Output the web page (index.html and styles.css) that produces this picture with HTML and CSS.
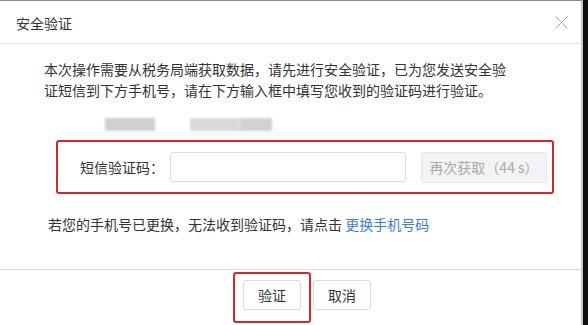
FILE: index.html
```html
<!DOCTYPE html>
<html>
<head>
<meta charset="utf-8">
<link rel="stylesheet" href="styles.css">
</head>
<body>
<div class="page">
  <div class="dialog">
    <div class="header">
      <span class="title">安全验证</span>
      <svg class="close" width="13" height="13" viewBox="0 0 13 13"><path d="M0.5 0.5L12.5 12.5M12.5 0.5L0.5 12.5" stroke="#a8a8a8" stroke-width="1" fill="none"/></svg>
    </div>
    <div class="body">
      <p class="intro">本次操作需要从税务局端获取数据，请先进行安全验证，已为您发送安全验<br>证短信到下方手机号，请在下方输入框中填写您收到的验证码进行验证。</p>
      <div class="phone">
        <span class="blur b1"></span>
        <span class="blur b2"></span>
        <span class="blur b3"></span>
      </div>
      <div class="codebox">
        <span class="label">短信验证码：</span>
        <span class="input"></span>
        <span class="resend">再次获取（44 s）</span>
      </div>
      <p class="change">若您的手机号已更换，无法收到验证码，请点击 <span class="link">更换手机号码</span></p>
    </div>
    <div class="footer">
      <span class="mark"><span class="btn">验证</span></span>
      <span class="btn">取消</span>
    </div>
  </div>
  <div class="edge"></div>
</div>
</body>
</html>
```
FILE: styles.css
```css
html, body {
  margin: 0;
  padding: 0;
  background: #fff;
}
body {
  font-family: "Noto Sans CJK SC", "Microsoft YaHei", sans-serif;
  color: #333;
  font-size: 14px;
}
.page {
  display: flex;
  width: 588px;
  height: 325px;
  overflow: hidden;
}
.dialog {
  width: 583px;
  height: 325px;
  border-top: 1px solid #8c8c8c;
  border-right: 2px solid #c8c8c8;
  box-sizing: border-box;
  display: flex;
  flex-direction: column;
}
.edge {
  width: 5px;
  background: #111;
}
.header {
  height: 43px;
  border-bottom: 1px solid #e5e5e5;
  display: flex;
  align-items: center;
  justify-content: space-between;
  padding: 0 13px 0 16px;
  box-sizing: border-box;
}
.title {
  font-size: 14px;
  line-height: 20px;
  color: #333;
  margin-top: 1px;
}
.close {
  margin-top: 0px;
}
.body {
  padding: 15px 0 0 44px;
  height: 226px;
  box-sizing: border-box;
  border-bottom: 1px solid #dcdcdc;
}
.intro {
  margin: 0;
  line-height: 21px;
  font-size: 14px;
  letter-spacing: 0;
}
.phone {
  display: flex;
  margin-top: 17px;
  height: 13px;
}
.blur {
  display: block;
  height: 13px;
  background: #d4d4d4;
  filter: blur(1.2px);
}
.b1 {
  width: 50px;
  margin-left: 61px;
  background: #d0d0d0;
}
.b2 {
  width: 50px;
  margin-left: 35px;
  background: #dadada;
}
.b3 {
  width: 32px;
  background: #d2d2d2;
}
.codebox {
  margin: 9px 0 0 12px;
  width: 498px;
  height: 54px;
  box-sizing: border-box;
  border: 2px solid #d5272b;
  border-radius: 3px;
  display: flex;
  align-items: center;
  padding: 0 0 0 22px;
}
.label {
  width: 84px;
  line-height: 20px;
  font-size: 14px;
  color: #333;
}
.input {
  display: block;
  width: 236px;
  height: 30px;
  margin-left: 6px;
  box-sizing: border-box;
  border: 1px solid #dcdcdc;
  border-radius: 3px;
  background: #fff;
}
.resend {
  display: flex;
  align-items: center;
  justify-content: center;
  width: 126px;
  height: 31px;
  margin-left: 15px;
  box-sizing: border-box;
  border: 1px solid #e6e6e6;
  border-radius: 3px;
  background: #f3f3f3;
  color: #a9a9a9;
  font-size: 14px;
}
.change {
  margin: 20px 0 0 4px;
  line-height: 21px;
  font-size: 14px;
}
.link {
  color: #3b7fc4;
}
.footer {
  display: flex;
  align-items: flex-start;
  padding: 2px 0 0 233px;
}
.mark {
  display: block;
  border: 2px solid #d5272b;
  border-radius: 3px;
  padding: 6px 8px 11px 8px;
}
.btn {
  display: flex;
  align-items: center;
  justify-content: center;
  width: 58px;
  height: 30px;
  box-sizing: border-box;
  border: 1px solid #dcdcdc;
  border-radius: 3px;
  background: #fff;
  color: #333;
  font-size: 14px;
}
.footer > .btn {
  margin: 8px 0 0 2px;
}
```
